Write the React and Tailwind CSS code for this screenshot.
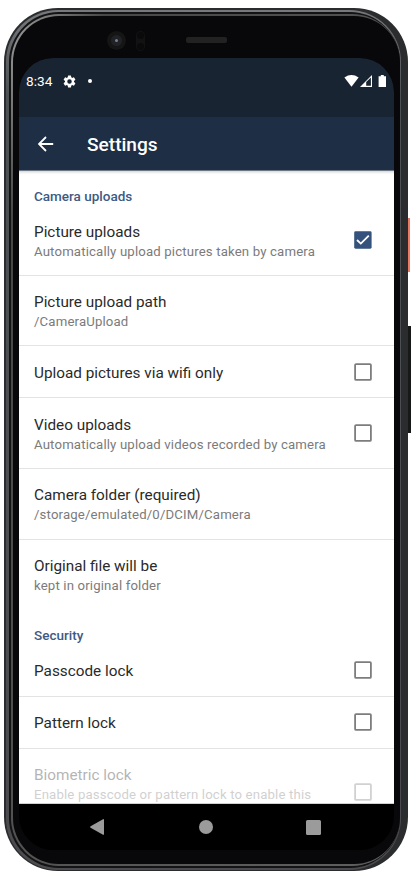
import React from "react";

const uploads = [
  { title: "Picture uploads", note: "Automatically upload pictures taken by camera", box: "on", h: "h-[70px] pt-px", line: true },
  { title: "Picture upload path", note: "/CameraUpload", h: "h-[70px] pt-[2px]", line: true },
  { title: "Upload pictures via wifi only", box: "off", h: "h-[52px] pt-[2px]", line: true },
  { title: "Video uploads", note: "Automatically upload videos recorded by camera", box: "off", h: "h-[71px] pt-[2px]", line: true },
  { title: "Camera folder (required)", note: "/storage/emulated/0/DCIM/Camera", h: "h-[71px]", line: true },
  { title: "Original file will be", note: "kept in original folder", h: "h-[70px]" },
];

const security = [
  { title: "Passcode lock", box: "off", h: "h-[52px]", line: true },
  { title: "Pattern lock", box: "off", h: "h-[52px]", line: true },
  { title: "Biometric lock", note: "Enable passcode or pattern lock to enable this", box: "low", h: "h-[71px]", dim: true },
];

function Box({ state }) {
  return (
    <svg viewBox="0 0 18 18" className={`h-[18px] w-[18px] shrink-0 ${state === "low" ? "mt-[14px]" : state === "on" ? "mb-[3px]" : "mb-[2px]"}`}>
      {state === "on" ? (
        <>
          <rect x="0.2" y="0.3" width="17.4" height="17.4" rx="1.4" fill="#34527c" />
          <path d="M3 9 L6.8 12.6 L14.8 4.6" fill="none" stroke="#fff" strokeWidth="1.8" />
        </>
      ) : (
        <rect x="1.1" y="1.1" width="15.8" height="15.8" rx="1" fill="none" stroke="#7d7d7d" strokeWidth="1.8" />
      )}
    </svg>
  );
}

function Row({ item }) {
  return (
    <div
      className={`flex shrink-0 items-center justify-between pl-[15px] pr-[22px] ${item.h} ${
        item.line ? "border-b border-[#e3e3e3]" : ""
      } ${item.dim ? "opacity-35" : ""}`}
    >
      <div className="whitespace-nowrap">
        <div className="text-[15.3px] leading-5 text-[#2a2a2a]">{item.title}</div>
        {item.note && <div className="text-[13.2px] leading-[19px] tracking-[0.155px] text-[#7b7b7b]">{item.note}</div>}
      </div>
      {item.box && <Box state={item.box} />}
    </div>
  );
}

function Heading({ children }) {
  return (
    <div className="h-[35px] shrink-0 pl-[15px] pt-[17px] text-[13.5px] font-medium leading-4 text-[#3d5a84]">{children}</div>
  );
}

function Screen() {
  return (
    <div className="flex h-[792px] w-[375px] flex-col overflow-hidden rounded-t-[34px] rounded-b-[34px] bg-black">
      <div className="flex h-[59px] shrink-0 items-start bg-[#182431] pl-[7px] pr-[7px] pt-[14px] text-white">
        <span className="text-[13.7px] leading-[19px]">8:34</span>
        <svg viewBox="0 0 24 24" className="ml-[10px] mt-[1.5px] h-[15px] w-[15px]" fill="#fff">
          <path d="M19.14 12.94c.04-.3.06-.61.06-.94s-.02-.64-.07-.94l2.03-1.58a.5.5 0 0 0 .12-.61l-1.92-3.32a.49.49 0 0 0-.59-.22l-2.39.96a7 7 0 0 0-1.62-.94l-.36-2.54a.48.48 0 0 0-.48-.41h-3.84a.47.47 0 0 0-.47.41l-.36 2.54c-.59.24-1.13.57-1.62.94l-2.39-.96a.48.48 0 0 0-.59.22L2.74 8.87a.48.48 0 0 0 .12.61l2.03 1.58a6 6 0 0 0-.02 1.88l-2.03 1.58a.5.5 0 0 0-.12.61l1.92 3.32c.12.22.37.29.59.22l2.39-.96c.5.38 1.03.7 1.62.94l.36 2.54c.05.24.24.41.48.41h3.84c.24 0 .44-.17.47-.41l.36-2.54a7 7 0 0 0 1.62-.94l2.39.96c.22.08.47 0 .59-.22l1.92-3.32a.47.47 0 0 0-.12-.61zM12 15.6a3.6 3.6 0 1 1 0-7.2 3.6 3.6 0 0 1 0 7.2z" />
        </svg>
        <span className="ml-[11px] mt-[7px] h-[4px] w-[4px] rounded-full bg-white" />
        <div className="flex-1" />
        <svg viewBox="0 0 43 14" className="mt-[2px] h-[14px] w-[43px]" fill="#fff">
          <path d="M0.4 3.4 Q7.5 -1.3 14.6 3.4 L7.5 12.8z" />
          <path d="M16 12.9 L28 1 V12.9z" />
          <path d="M22.2 8 L26.9 3.6 V11.7 H22.2z" fill="#182431" />
          <path d="M34.6 2.2 H36.8 V0.9 H39.8 V2.2 H42 V12.9 H34.6z" />
        </svg>
      </div>
      <div className="flex h-[54px] shrink-0 items-center border-b border-[#6d7884] bg-[#1e2e44] pl-[19px] text-white">
        <svg viewBox="0 0 16 16" className="h-4 w-4" fill="none" stroke="#fff" strokeWidth="1.8">
          <path d="M15.2 8 H1.6 M8 1 L1 8 L8 15" />
        </svg>
        <h1 className="ml-[33px] pt-[2px] text-[19.1px] font-medium leading-6">Settings</h1>
      </div>
      <div className="flex h-[633px] shrink-0 flex-col overflow-hidden border-b border-[#d0d0d0] bg-white shadow-[inset_0_3px_3px_-2px_#0003]">
        <Heading>Camera uploads</Heading>
        {uploads.map((item) => (
          <Row key={item.title} item={item} />
        ))}
        <Heading>Security</Heading>
        {security.map((item) => (
          <Row key={item.title} item={item} />
        ))}
      </div>
      <div className="flex h-[46px] shrink-0 items-center pl-[71px]">
        <svg viewBox="0 0 14 16" className="h-4 w-[14px]" fill="#9b9b9b">
          <path d="M13 0.2 Q14 -0.2 14 1 V15 Q14 16.2 13 15.7 L0.6 8.8 Q-0.4 8 0.6 7.2z" />
        </svg>
        <span className="ml-[95px] h-[14px] w-[14px] rounded-full bg-[#9b9b9b]" />
        <span className="ml-[93px] h-[15px] w-[15px] rounded-[1.5px] bg-[#9b9b9b]" />
      </div>
    </div>
  );
}

export default function App() {
  return (
    <div className="relative h-[878px] w-[414px] overflow-hidden bg-white px-1 pt-2 font-['Roboto','Liberation_Sans',sans-serif]">
      <div className="absolute left-[407px] top-[218px] h-[54px] w-[3px] bg-[#ee7a64]" />
      <div className="absolute left-[407px] top-[326px] h-[107px] w-[4px] bg-[#171918]" />
      <div className="relative h-[863px] w-[404px] rounded-[54px] bg-[#2b2c2d] pb-px pl-[2px] pr-[7px] pt-[2px]">
        <div className="h-full w-full rounded-[52px] bg-linear-to-b from-[#77797d] via-[#4d5154] via-10% to-[#4b4b4f] pb-[2px] pl-[3px] pr-px pt-[2px]">
          <div className="h-full w-full rounded-[50px] bg-[#131314] pb-[2px] pl-[2px] pt-[2px]">
            <div className="h-full w-full rounded-[48px] bg-linear-to-br from-[#a0a0a0] via-[#484848] via-12% to-[#606060] pb-[2px] pl-[2px] pt-[2px]">
              <div className="h-full w-full rounded-[46px] bg-[#080709] pl-[6px]">
                <div className="relative h-[42px]">
                  <div className="absolute left-[88px] top-[15px] flex h-[19px] w-[19px] items-center justify-center rounded-full bg-[#151515]">
                    <div className="flex h-[11px] w-[11px] items-center justify-center rounded-full bg-[#212228]">
                      <div className="h-[3px] w-[3px] rounded-full bg-[#7b7e92]" />
                    </div>
                  </div>
                  <div className="absolute left-[117px] top-[15px] flex h-[20px] w-[9px] flex-col items-center justify-between rounded-full bg-[#121212] p-px">
                    <span className="h-[7px] w-[7px] rounded-full bg-[#0a0a0c]" />
                    <span className="h-[7px] w-[7px] rounded-full bg-[#0a0a0c]" />
                  </div>
                  <div className="absolute left-[167px] top-[21px] h-[6px] w-[41px] rounded-[2px] bg-[#222222]" />
                </div>
                <Screen />
              </div>
            </div>
          </div>
        </div>
      </div>
    </div>
  );
}
